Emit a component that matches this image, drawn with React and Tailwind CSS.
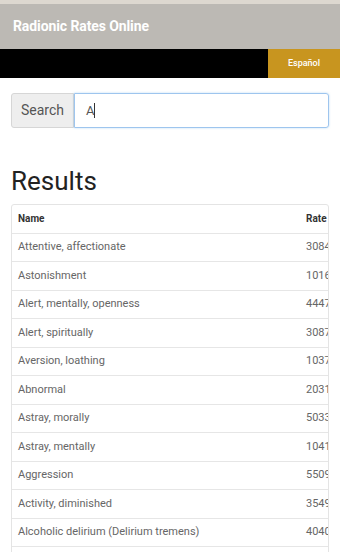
const rows = [
  ['Attentive, affectionate', '3084'],
  ['Astonishment', '1016'],
  ['Alert, mentally, openness', '4447'],
  ['Alert, spiritually', '3087'],
  ['Aversion, loathing', '1037'],
  ['Abnormal', '2031'],
  ['Astray, morally', '5033'],
  ['Astray, mentally', '1041'],
  ['Aggression', '5509'],
  ['Activity, diminished', '3549'],
  ['Alcoholic delirium (Delirium tremens)', '4040'],
  ['Anger', '3016'],
];

export default function App() {
  return (
    <div className="w-[340px] h-[552px] overflow-hidden bg-white font-['Roboto',sans-serif]">
      {/* top strip */}
      <div className="h-[4px] bg-[#ddd8d0]" />

      {/* title bar */}
      <div className="h-[45px] bg-[#bcb9b4] flex items-center px-[13px]">
        <span className="text-white font-bold text-[14px] tracking-[-0.1px]">Radionic Rates Online</span>
      </div>

      {/* nav */}
      <div className="h-[29px] bg-black flex justify-end">
        <button className="w-[72px] h-full bg-[#c8951f] text-white text-[9px] font-medium">Español</button>
      </div>

      {/* search */}
      <div className="px-[11px] pt-[15px]">
        <div className="flex h-[35px]">
          <span className="w-[63px] flex items-center justify-center bg-[#eeeeee] border border-[#d6d6d6] rounded-l-[3px] text-[#555] text-[14px]">
            Search
          </span>
          <div className="flex-1 flex items-center border border-[#9ec5ee] rounded-r-[3px] px-[11px] shadow-[0_0_2px_rgba(102,175,233,0.5)]">
            <span className="text-[#555] text-[13px]">A</span>
            <span className="w-px h-[15px] bg-[#333]" />
          </div>
        </div>
      </div>

      {/* results */}
      <h1 className="px-[11px] mt-[38px] text-[26px] leading-[30px] text-[#222] font-normal">Results</h1>

      <div className="mx-[11px] mt-[8px] w-[318px] border border-[#e4e4e4] rounded-t-[3px] overflow-hidden">
        <table className="w-[360px] border-collapse text-left">
          <thead>
            <tr className="h-[28px] border-b border-[#e6e6e6]">
              <th className="pl-[6px] text-[10px] font-bold text-[#333]">Name</th>
              <th className="w-[66px] text-[10px] font-bold text-[#333]">Rate</th>
            </tr>
          </thead>
          <tbody>
            {rows.map(([name, rate]) => (
              <tr key={name} className="h-[28.5px] border-b border-[#e6e6e6]">
                <td className="pl-[6px] text-[11px] text-[#666]">{name}</td>
                <td className="text-[11px] text-[#666]">{rate}</td>
              </tr>
            ))}
          </tbody>
        </table>
      </div>
    </div>
  );
}
